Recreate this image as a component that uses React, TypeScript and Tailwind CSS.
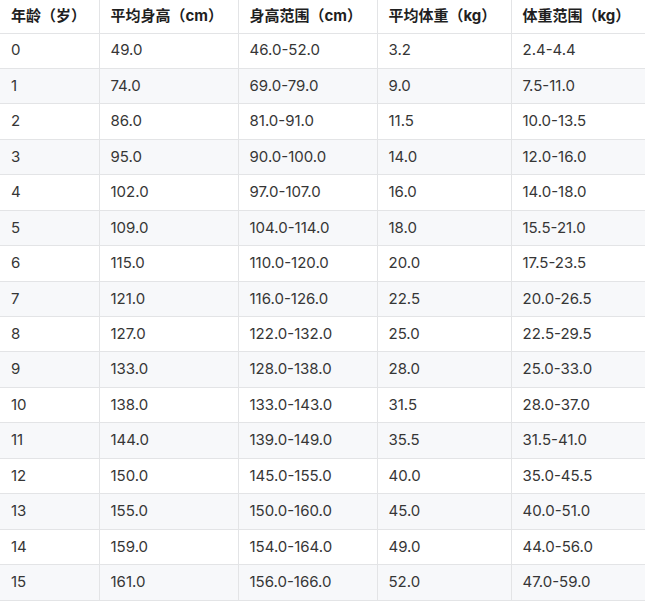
import React from "react";

const rows: string[][] = [
  ["0", "49.0", "46.0-52.0", "3.2", "2.4-4.4"],
  ["1", "74.0", "69.0-79.0", "9.0", "7.5-11.0"],
  ["2", "86.0", "81.0-91.0", "11.5", "10.0-13.5"],
  ["3", "95.0", "90.0-100.0", "14.0", "12.0-16.0"],
  ["4", "102.0", "97.0-107.0", "16.0", "14.0-18.0"],
  ["5", "109.0", "104.0-114.0", "18.0", "15.5-21.0"],
  ["6", "115.0", "110.0-120.0", "20.0", "17.5-23.5"],
  ["7", "121.0", "116.0-126.0", "22.5", "20.0-26.5"],
  ["8", "127.0", "122.0-132.0", "25.0", "22.5-29.5"],
  ["9", "133.0", "128.0-138.0", "28.0", "25.0-33.0"],
  ["10", "138.0", "133.0-143.0", "31.5", "28.0-37.0"],
  ["11", "144.0", "139.0-149.0", "35.5", "31.5-41.0"],
  ["12", "150.0", "145.0-155.0", "40.0", "35.0-45.5"],
  ["13", "155.0", "150.0-160.0", "45.0", "40.0-51.0"],
  ["14", "159.0", "154.0-164.0", "49.0", "44.0-56.0"],
  ["15", "161.0", "156.0-166.0", "52.0", "47.0-59.0"],
];

const headers = ["年龄（岁）", "平均身高（cm）", "身高范围（cm）", "平均体重（kg）", "体重范围（kg）"];
const widths = ["w-[99px]", "w-[139px]", "w-[139px]", "w-[134px]", "w-[134px]"];

export default function App() {
  return (
    <div
      className="w-[645px] h-[602px] bg-white overflow-hidden"
      style={{ fontFamily: '"Inter", "Noto Sans CJK SC", sans-serif' }}
    >
      <table className="w-[645px] border-collapse table-fixed text-[15px] text-[#363636]">
        <colgroup>
          {widths.map((w, i) => (
            <col key={i} className={w} />
          ))}
        </colgroup>
        <thead>
          <tr className="h-[33px] bg-white">
            {headers.map((h, i) => (
              <th
                key={i}
                className={`text-left font-bold text-[#1f1f1f] pl-[11px] border-b border-[#e3e4e6] ${
                  i < 4 ? "border-r" : ""
                } border-r-[#e3e4e6] align-middle whitespace-nowrap`}
              >
                {h}
              </th>
            ))}
          </tr>
        </thead>
        <tbody>
          {rows.map((r, ri) => (
            <tr key={ri} className={`h-[35.44px] ${ri % 2 === 1 ? "bg-[#f7f8fa]" : "bg-white"}`}>
              {r.map((c, ci) => (
                <td
                  key={ci}
                  className={`pl-[11px] border-b border-[#e3e4e6] ${
                    ci < 4 ? "border-r" : ""
                  } border-r-[#e3e4e6] align-middle whitespace-nowrap`}
                >
                  {c}
                </td>
              ))}
            </tr>
          ))}
        </tbody>
      </table>
    </div>
  );
}
